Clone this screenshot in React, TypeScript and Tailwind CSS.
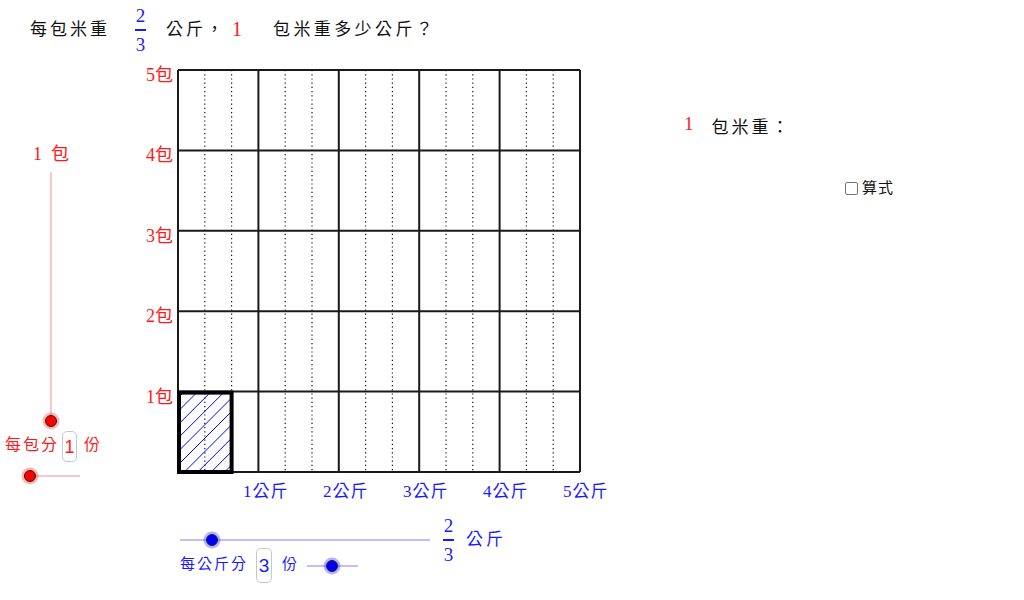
import React from "react";

const SERIF = "font-['Liberation_Serif','Noto_Sans_CJK_TC',serif]";

const GX = 178;
const GY = 70;
const CELL = 80.4;

function Grid() {
  const lines = [0, 1, 2, 3, 4, 5];
  const dotted: number[] = [];
  for (let c = 0; c < 5; c++) {
    dotted.push(GX + c * CELL + CELL / 3, GX + c * CELL + (2 * CELL) / 3);
  }
  const hx0 = GX;
  const hx1 = GX + (2 * CELL) / 3;
  const hy0 = GY + 4 * CELL;
  const hy1 = GY + 5 * CELL;
  const hatches: number[] = [];
  for (let k = -6; k < 14; k++) hatches.push(hy0 + k * 13.4);
  return (
    <svg className="absolute left-0 top-0" width={1024} height={600}>
      <defs>
        <clipPath id="hatchClip">
          <rect x={hx0} y={hy0} width={hx1 - hx0} height={hy1 - hy0} />
        </clipPath>
      </defs>
      {dotted.map((x) => (
        <line
          key={x}
          x1={x}
          x2={x}
          y1={GY}
          y2={GY + 5 * CELL}
          stroke="#111"
          strokeWidth={1.2}
          strokeDasharray="1.2 3"
        />
      ))}
      <g clipPath="url(#hatchClip)">
        {hatches.map((y) => (
          <line key={y} x1={hx0} y1={y + 60} x2={hx0 + 60} y2={y} stroke="#0000ff" strokeWidth={1} />
        ))}
      </g>
      {lines.map((i) => (
        <line
          key={"v" + i}
          x1={GX + i * CELL}
          x2={GX + i * CELL}
          y1={GY}
          y2={GY + 5 * CELL}
          stroke="#1a1a1a"
          strokeWidth={2}
        />
      ))}
      {lines.map((i) => (
        <line
          key={"h" + i}
          y1={GY + i * CELL}
          y2={GY + i * CELL}
          x1={GX}
          x2={GX + 5 * CELL}
          stroke="#1a1a1a"
          strokeWidth={2}
        />
      ))}
      <rect
        x={hx0 + 1}
        y={hy0 + 1}
        width={hx1 - hx0 - 1}
        height={hy1 - hy0 - 1}
        fill="none"
        stroke="#000"
        strokeWidth={4}
      />
      {/* slider tracks */}
      <line x1={51} y1={172} x2={51} y2={421} stroke="#f29090" strokeWidth={1} />
      <line x1={30} y1={476} x2={80} y2={476} stroke="#f29090" strokeWidth={1} />
      <line x1={180} y1={540} x2={430} y2={540} stroke="#8080ff" strokeWidth={1} />
      <line x1={307} y1={566} x2={358} y2={566} stroke="#8080ff" strokeWidth={1} />
      {[
        [51, 421, "#ff0000"],
        [30, 476, "#ff0000"],
        [212, 540, "#0000ff"],
        [332, 566, "#0000ff"],
      ].map(([x, y, c]) => (
        <g key={`${x}-${y}`}>
          <circle cx={x as number} cy={y as number} r={8.5} fill={c as string} opacity={0.3} />
          <circle cx={x as number} cy={y as number} r={5.5} fill={c as string} stroke="#222" strokeWidth={1} />
        </g>
      ))}
    </svg>
  );
}

function Frac() {
  return (
    <div className={`flex flex-col items-center text-[19px] leading-none text-[#1a1aff] ${SERIF}`}>
      <span>2</span>
      <span className="my-[4px] h-[1.5px] w-[11px] bg-[#1a1aff]" />
      <span>3</span>
    </div>
  );
}

function CountBox({ value, className }: { value: string; className: string }) {
  return (
    <div
      className={`flex items-center justify-center rounded-[5px] border border-[#c8c8c8] font-['Liberation_Sans',sans-serif] ${className}`}
    >
      {value}
    </div>
  );
}

export default function App() {
  const rows = [5, 4, 3, 2, 1];
  return (
    <div className="relative h-[600px] w-[1024px] overflow-hidden bg-white">
      <Grid />

      {/* question */}
      <div className={`absolute left-[30px] top-[6px] flex items-center leading-none ${SERIF}`}>
        <span className="text-[17px] tracking-[3px] text-[#111]">每包米重</span>
        <span className="ml-[25px]">
          <Frac />
        </span>
        <span className="ml-[20px] text-[17px] tracking-[3px] text-[#111]">公斤，</span>
        <span className="ml-[6px] -mt-[2px] text-[20px] text-[#ff1a1a]">1</span>
        <span className="ml-[31px] text-[17px] tracking-[3.4px] text-[#111]">包米重多少公斤？</span>
      </div>

      {/* row labels */}
      <div className={`absolute left-[146px] top-[66px] flex flex-col gap-[62.4px] text-[18px] leading-none text-[#ff1a1a] ${SERIF}`}>
        {rows.map((r) => (
          <span key={r}>{r}包</span>
        ))}
      </div>

      {/* column labels */}
      <div className={`absolute left-[243px] top-[483px] flex gap-[29px] text-[17px] leading-none tracking-[1px] text-[#1a1aff] ${SERIF}`}>
        {[1, 2, 3, 4, 5].map((c) => (
          <span key={c} className="w-[51px]">
            {c}公斤
          </span>
        ))}
      </div>

      {/* left slider */}
      <div className={`absolute left-[33px] top-[145px] flex text-[18px] leading-none text-[#ff1a1a] ${SERIF}`}>
        <span>1</span>
        <span className="ml-[9px]">包</span>
      </div>
      <div className={`absolute left-[5px] top-[431px] flex items-center text-[16px] leading-none text-[#ff1a1a] ${SERIF}`}>
        <span className="-mt-[3px] tracking-[2px]">每包分</span>
        <CountBox value="1" className="ml-[3px] h-[31px] w-[15px] text-[18px] text-[#ff1a1a]" />
        <span className="-mt-[3px] ml-[7px]">份</span>
      </div>

      {/* bottom slider */}
      <div className={`absolute left-[443px] top-[516px] flex items-center leading-none ${SERIF}`}>
        <Frac />
        <span className="ml-[12px] text-[17px] tracking-[3px] text-[#1a1aff]">公斤</span>
      </div>
      <div className={`absolute left-[180px] top-[548px] flex items-center text-[15px] leading-none text-[#1a1aff] ${SERIF}`}>
        <span className="-mt-[3px] tracking-[2px]">每公斤分</span>
        <CountBox value="3" className="ml-[8px] h-[35px] w-[16px] text-[19px] text-[#1a1aff]" />
        <span className="-mt-[3px] ml-[10px]">份</span>
      </div>

      {/* answer */}
      <div className={`absolute left-[684px] top-[114px] flex items-start leading-none ${SERIF}`}>
        <span className="text-[19px] text-[#ff1a1a]">1</span>
        <span className="ml-[18px] mt-[5px] text-[17px] tracking-[3px] text-[#111]">包米重：</span>
      </div>
      <label className="absolute left-[845px] top-[181px] flex items-center gap-[4px]">
        <span className="h-[13px] w-[13px] rounded-[2px] border-[1.5px] border-[#777] bg-white" />
        <span className={`text-[15px] leading-none tracking-[1px] text-[#111] ${SERIF}`}>算式</span>
      </label>
    </div>
  );
}
